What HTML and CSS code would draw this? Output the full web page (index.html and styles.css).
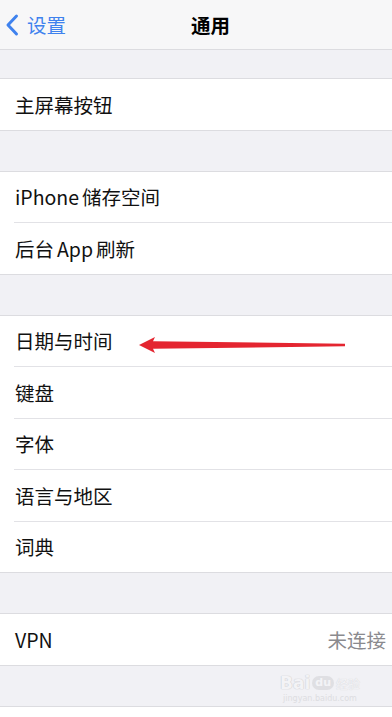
FILE: index.html
```html
<!DOCTYPE html>
<html lang="zh-CN">
<head>
<meta charset="utf-8">
<title>通用</title>
<link rel="stylesheet" href="styles.css">
</head>
<body>
<div class="screen">
  <header class="nav">
    <div class="back">
      <svg class="chev" width="14" height="24" viewBox="0 0 14 24"><path d="M11.5 3 L3 12 L11.5 21" fill="none" stroke="#3f82ee" stroke-width="3" stroke-linecap="round" stroke-linejoin="round"/></svg>
      <span>设置</span>
    </div>
    <div class="title">通用</div>
  </header>

  <section class="group first">
    <div class="row"><span class="label">主屏幕按钮</span></div>
  </section>

  <section class="group">
    <div class="row"><span class="label">iPhone<span class="gap"></span>储存空间</span></div>
    <div class="row"><span class="label">后台<span class="gap"></span>App<span class="gap"></span>刷新</span></div>
  </section>

  <section class="group">
    <div class="row"><span class="label">日期与时间</span></div>
    <div class="row"><span class="label">键盘</span></div>
    <div class="row"><span class="label">字体</span></div>
    <div class="row"><span class="label">语言与地区</span></div>
    <div class="row"><span class="label">词典</span></div>
  </section>

  <section class="group">
    <div class="row"><span class="label">VPN</span><span class="value">未连接</span></div>
  </section>

  <section class="group">
    <div class="row"></div>
  </section>

  <svg class="arrow" width="392" height="717" viewBox="0 0 392 717">
    <polygon points="139,345 155,337 153,341.2 345,343.8 345,346.2 153,348.8 155,353" fill="#e42530"/>
  </svg>

  <div class="watermark">
    <div class="wm-top"><span class="wm-bai">Bai</span><span class="wm-paw">du</span><span class="wm-jy">经验</span></div>
    <div class="wm-url">jingyan.baidu.com</div>
  </div>
</div>
</body>
</html>
```

FILE: styles.css
```css
* { box-sizing: border-box; }
html, body { margin: 0; padding: 0; }
body {
  background: #f1f1f5;
  font-family: "Noto Sans CJK SC", "Noto Sans", sans-serif;
  color: #111;
}
.screen {
  position: relative;
  width: 392px;
  height: 717px;
  overflow: hidden;
  background: #f1f1f5;
}
.nav {
  height: 50px;
  background: #f7f7f8;
  border-bottom: 1px solid #dcdce0;
  display: flex;
  align-items: center;
  justify-content: center;
  padding-left: 29px;
  position: relative;
}
.back {
  position: absolute;
  left: 5px;
  top: 0;
  height: 49px;
  display: flex;
  align-items: center;
  gap: 8px;
  color: #3f82ee;
  font-size: 19.5px;
}
.chev { display: block; margin-top: 1px; }
.title {
  font-size: 19.5px;
  font-weight: 700;
  color: #000;
  margin-top: -1px;
}
.group {
  margin-top: 40px;
  background: #fff;
  border-top: 1px solid #dcdce0;
  border-bottom: 1px solid #dcdce0;
}
.group.first { margin-top: 28px; }
.row {
  height: 51.5px;
  margin-left: 14px;
  padding-left: 1px;
  padding-right: 6px;
  display: flex;
  align-items: center;
  justify-content: space-between;
  border-bottom: 1px solid #e2e2e6;
  font-size: 19.5px;
}
.row:last-child { border-bottom: none; height: 50.5px; }
.label { color: #111; }
.gap { display: inline-block; width: 3px; }
.value { color: #8a8a8e; }
.arrow {
  position: absolute;
  left: 0;
  top: 0;
  pointer-events: none;
}
.watermark {
  position: absolute;
  left: 275px;
  top: 666px;
  width: 90px;
  color: #fff;
  text-align: center;
  opacity: 0.9;
}
.wm-top {
  display: flex;
  align-items: flex-end;
  justify-content: center;
  gap: 2px;
  height: 28px;
}
.wm-bai {
  font-family: "DejaVu Sans", sans-serif;
  font-size: 17px;
  font-weight: 700;
  color: #f4f4f7;
  text-shadow: 0 0 1px #c8c8cc, 0 0 1px #c8c8cc;
  line-height: 22px;
}
.wm-paw {
  font-family: "DejaVu Sans", sans-serif;
  font-size: 11px;
  font-weight: 700;
  color: #f4f4f7;
  background: #dedee2;
  border-radius: 8px;
  padding: 0 3px;
  line-height: 14px;
  margin-bottom: 4px;
}
.wm-jy {
  font-size: 12px;
  color: #f4f4f7;
  text-shadow: 0 0 1px #c8c8cc;
  line-height: 20px;
}
.wm-url {
  font-family: "DejaVu Sans", sans-serif;
  font-size: 8px;
  color: #dcdce0;
  line-height: 10px;
}
```
